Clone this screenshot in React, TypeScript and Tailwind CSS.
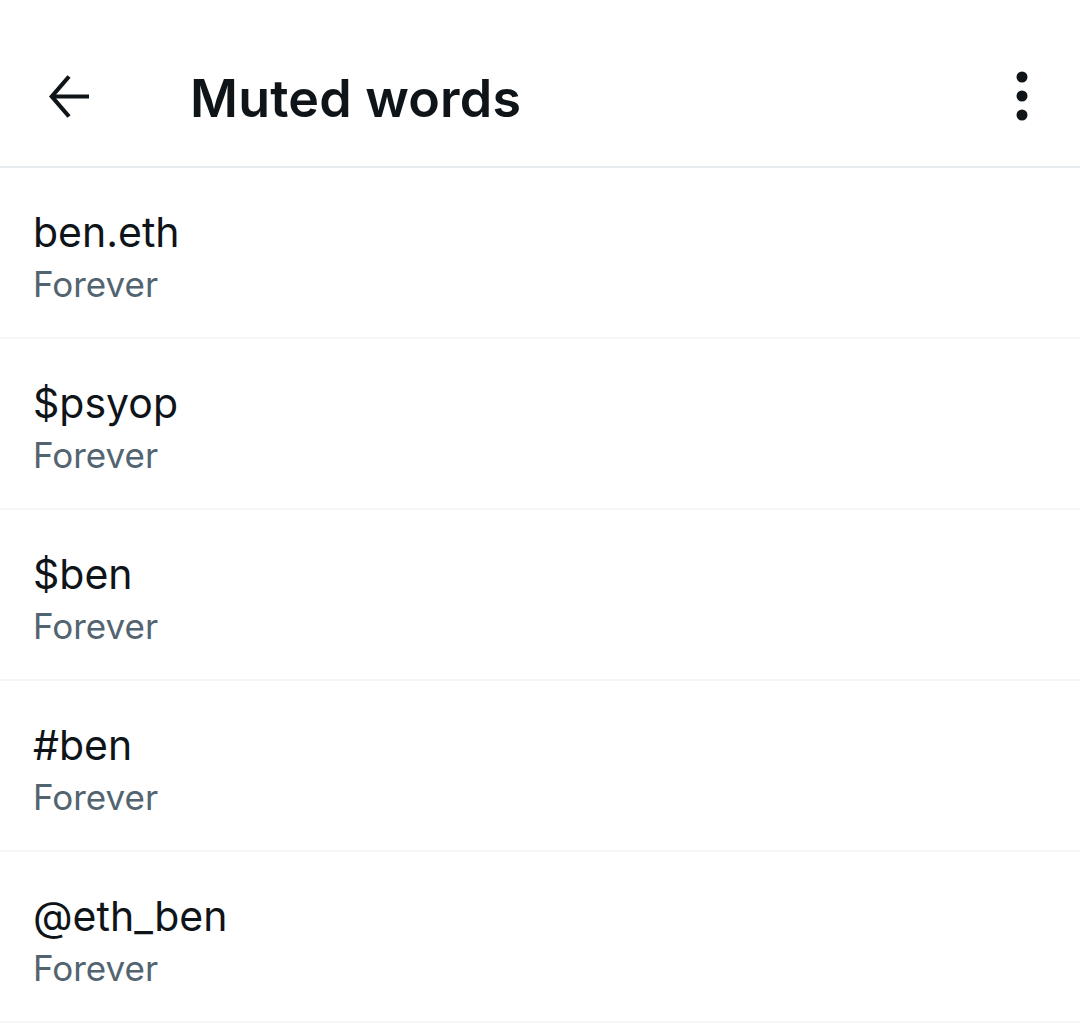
const mutedWords = ["ben.eth", "$psyop", "$ben", "#ben", "@eth_ben"];

function BackIcon() {
  return (
    <svg width="41" height="45" viewBox="0 0 41 45" fill="none" stroke="#0f1419" strokeWidth="4.2" strokeLinecap="butt">
      <path d="M20 2.5 L2.8 22.5 L20 42.5" strokeLinejoin="miter" />
      <path d="M3 22.5 H40" />
    </svg>
  );
}

function MoreIcon() {
  return (
    <svg width="12" height="50" viewBox="0 0 12 50" fill="#0f1419">
      <circle cx="6" cy="6" r="5.5" />
      <circle cx="6" cy="25" r="5.5" />
      <circle cx="6" cy="44" r="5.5" />
    </svg>
  );
}

export default function App() {
  return (
    <div className="w-[1080px] h-[1024px] overflow-hidden bg-white font-['Inter',sans-serif] text-[#0f1419]">
      <header className="h-[168px] flex items-center border-b-2 border-[#e7ecee] pl-[49px] pr-[52px] pt-[26px]">
        <BackIcon />
        <h1 className="ml-[100px] text-[52px] font-semibold tracking-[0.2px] leading-none pt-[6px]">
          Muted words
        </h1>
        <div className="ml-auto">
          <MoreIcon />
        </div>
      </header>
      <ul>
        {mutedWords.map((word) => (
          <li
            key={word}
            className="h-[171px] flex flex-col justify-center pl-[33px] pt-[10px] border-b-2 border-[#f4f6f7]"
          >
            <span className="text-[41px] leading-[52px]">{word}</span>
            <span className="text-[35px] leading-[52px] text-[#536471]">Forever</span>
          </li>
        ))}
      </ul>
    </div>
  );
}
